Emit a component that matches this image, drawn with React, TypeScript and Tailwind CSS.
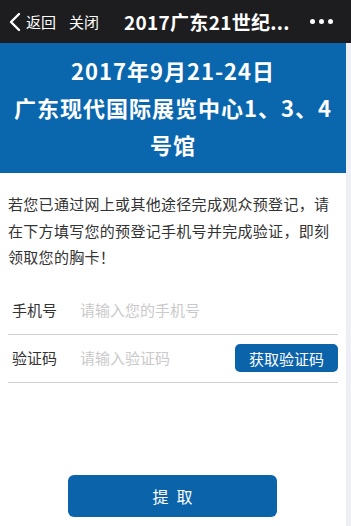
import React from 'react';

const FONT = { fontFamily: '"Noto Sans CJK SC", "Noto Sans", sans-serif' };

const TopBar: React.FC = () => (
  <div className="h-[43px] bg-[#1d1d1f] flex items-center text-white">
    <svg className="ml-[9px] w-[12px] h-[20px]" viewBox="0 0 12 20" fill="none" stroke="currentColor" strokeWidth="2.4" strokeLinecap="round" strokeLinejoin="round">
      <path d="M10 2L2 10l8 8" />
    </svg>
    <span className="ml-[5px] text-[15px] leading-none">返回</span>
    <span className="ml-[13px] text-[15px] leading-none">关闭</span>
    <span className="ml-[25px] text-[19px] font-bold leading-none tracking-[0.3px]">2017广东21世纪...</span>
    <div className="ml-auto mr-[18px] flex gap-[4px]">
      <span className="w-[5px] h-[5px] rounded-full bg-white" />
      <span className="w-[5px] h-[5px] rounded-full bg-white" />
      <span className="w-[5px] h-[5px] rounded-full bg-white" />
    </div>
  </div>
);

const FieldRow: React.FC<{ label: string; placeholder: string; action?: string }> = ({ label, placeholder, action }) => (
  <div className="mx-2 h-[48px] flex items-center border-b border-[#cfcfd4]">
    <span className="w-[72px] pl-[4px] text-[15px] text-[#333]">{label}</span>
    <input
      className="flex-1 min-w-0 text-[15px] text-[#333] placeholder:text-[#cacaca] bg-transparent outline-none"
      placeholder={placeholder}
      style={FONT}
    />
    {action && (
      <button className="w-[103px] h-[28px] rounded-[5px] bg-[#0b63aa] text-white text-[15px] leading-none">
        {action}
      </button>
    )}
  </div>
);

export default function App() {
  return (
    <div className="w-[351px] h-[526px] bg-white overflow-hidden flex flex-col" style={FONT}>
      <TopBar />
      <div className="flex flex-1">
        <div className="w-[346px] flex flex-col">
          <div className="h-[130px] bg-[#0a67ae] text-white font-bold text-[22px] leading-[37px] text-center flex flex-col justify-center pb-[2px] tracking-[1px]">
            <div>2017年9月21-24日</div>
            <div>广东现代国际展览中心1、3、4</div>
            <div>号馆</div>
          </div>
          <p className="mt-[18px] px-2 text-[15px] leading-[26.5px] text-[#333] tracking-[0.3px]">
            若您已通过网上或其他途径完成观众预登记，请在下方填写您的预登记手机号并完成验证，即刻领取您的胸卡！
          </p>
          <div className="mt-[16px]">
            <FieldRow label="手机号" placeholder="请输入您的手机号" />
            <FieldRow label="验证码" placeholder="请输入验证码" action="获取验证码" />
          </div>
          <div className="mt-[92px] flex">
            <button className="ml-[68px] w-[209px] h-[42px] rounded-[6px] bg-[#0b63aa] text-white text-[16px] tracking-[8px] pl-[8px]">
              提取
            </button>
          </div>
        </div>
        <div className="flex-1 bg-[#edeff4]" />
      </div>
    </div>
  );
}
